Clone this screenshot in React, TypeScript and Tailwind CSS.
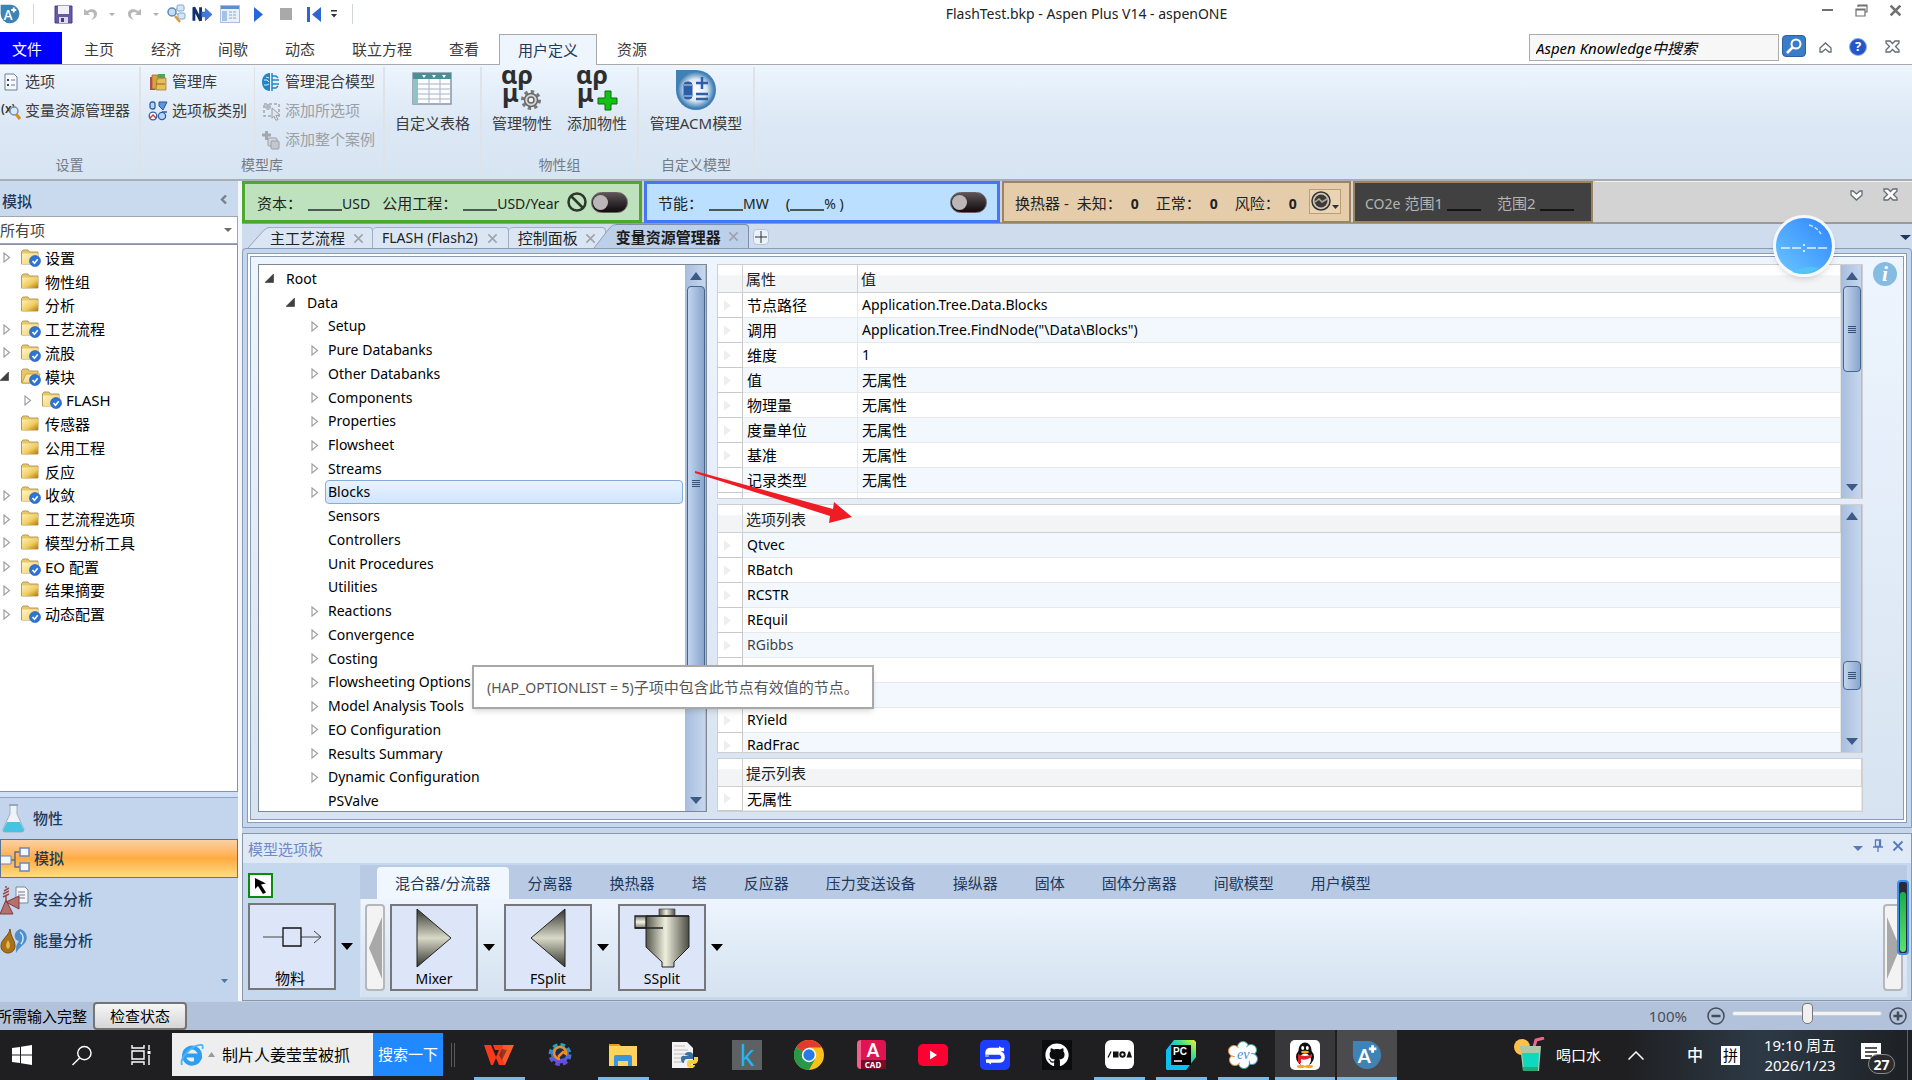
import React from "react";
import { FaGithub } from "react-icons/fa";

const latin = "text-[14px]";

/* ---------- small shared drawings ---------- */

function AspenLogo({ size }: { size: number }) {
  return (
    <svg width={size} height={size} viewBox="0 0 32 32" aria-hidden="true">
      <path d="M1 1h17a15 15 0 1 1-17 15z" fill="#3f82b5" />
      <text x="6" y="25" fontSize="20" fontWeight="700" fill="#fff" fontFamily="Lato, sans-serif">A</text>
      <path d="M18 9.500h8M22 5.500v8" stroke="#fff" strokeWidth="3" />
    </svg>
  );
}

function Caret({ color = "#000", w = 12, h = 7 }: { color?: string; w?: number; h?: number }) {
  return (
    <svg width={w} height={h} viewBox="0 0 12 7" preserveAspectRatio="none" aria-hidden="true">
      <path d="M0 0h12L6 7z" fill={color} />
    </svg>
  );
}

function CaretUp() {
  return (
    <svg width="12" height="8" viewBox="0 0 12 8" aria-hidden="true">
      <path d="M0 8h12L6 0z" fill="#3c5a86" />
    </svg>
  );
}

function OpenTri() {
  return (
    <svg width="8" height="11" viewBox="0 0 8 11" aria-hidden="true">
      <path d="M1 1v9l5.500-4.500z" fill="#fff" stroke="#a0a0a0" strokeWidth="1.200" />
    </svg>
  );
}

function FilledTri() {
  return (
    <svg width="9" height="9" viewBox="0 0 9 9" aria-hidden="true">
      <path d="M8.500 0v8.500H0z" fill="#404040" stroke="#222" strokeWidth="0.500" />
    </svg>
  );
}

function Folder({ checked, open }: { checked?: boolean; open?: boolean }) {
  return (
    <svg width="20" height="18" viewBox="0 0 20 18" aria-hidden="true">
      <defs>
        <linearGradient id="fold" x1="0" y1="0" x2="1" y2="1">
          <stop offset="0" stopColor="#fdf0b4" />
          <stop offset=".55" stopColor="#f0cd62" />
          <stop offset="1" stopColor="#b87a0a" />
        </linearGradient>
        <linearGradient id="foldl" x1="0" y1="0" x2="1" y2="1">
          <stop offset="0" stopColor="#fff3c0" />
          <stop offset="1" stopColor="#f1cf6d" />
        </linearGradient>
      </defs>
      <path d="M.5 15V2.500L2 1h5l1.500 2H17v12z" fill="#e9c766" stroke="#b39b62" />
      {open ? (
        <path d="M1 15L5 6h14l-3 9z" fill="url(#foldl)" stroke="#c9a54a" />
      ) : (
        <path d="M1 4.500h16V15H1z" fill={checked ? "url(#foldl)" : "url(#fold)"} />
      )}
      {checked && (
        <>
          <circle cx="14" cy="12" r="5.500" fill="#2d74d8" stroke="#1c56ac" strokeWidth=".6" />
          <path d="M11.500 12l2 2.200 3.200-4" fill="none" stroke="#fff" strokeWidth="1.600" />
        </>
      )}
    </svg>
  );
}

function Cross({ size, color, width }: { size: number; color: string; width: number }) {
  return (
    <svg width={size} height={size} viewBox="0 0 12 12" aria-hidden="true">
      <path d="M1.500 1.500l9 9M10.500 1.500l-9 9" stroke={color} strokeWidth={width} />
    </svg>
  );
}

function OutlinedCross() {
  return (
    <svg width="15" height="13" viewBox="0 0 15 13" aria-hidden="true">
      <path d="M1 1h4l2.500 2.500L10 1h4v2l-3.500 3.500L14 10v2h-4L7.500 9.500 5 12H1v-2l3.500-3.500L1 3z" fill="#fff" stroke="#656b75" strokeWidth="1.300" />
    </svg>
  );
}

function OutlinedChevron({ down }: { down?: boolean }) {
  return (
    <svg width="13" height="11" viewBox="0 0 13 11" className={down ? "rotate-180" : ""} aria-hidden="true">
      <path d="M1 6l5.500-5L12 6v4h-2L6.500 7 3 10H1z" fill="#fff" stroke="#656b75" strokeWidth="1.300" />
    </svg>
  );
}

/* ---------- title bar ---------- */

function IconButton({ label, className, children }: { label: string; className?: string; children: React.ReactNode }) {
  return (
    <button type="button" aria-label={label} className={"flex shrink-0 items-center justify-center " + (className ?? "")}>
      {children}
    </button>
  );
}

function TitleBar() {
  return (
    <header className="flex h-8 shrink-0 bg-white">
      <div className="flex h-7 items-center">
        <IconButton label="Aspen Plus" className="w-5"><AspenLogo size={20} /></IconButton>
        <span className="ml-[13px] h-5 w-px bg-gray-300" />
        <IconButton label="保存" className="ml-[19px] w-5">
          <svg width="19" height="19" viewBox="0 0 19 19">
            <path d="M1 1h17v17H1z" fill="#6a57a8" stroke="#4c3c86" />
            <path d="M4 1h11v8H4z" fill="#eef0fa" />
            <path d="M5 12h9v6H5z" fill="#d9dced" />
            <path d="M7 13h3v4H7z" fill="#4c3c86" />
          </svg>
        </IconButton>
        <IconButton label="撤销" className="ml-[9px] w-4">
          <svg width="15" height="15" viewBox="0 0 15 15"><path d="M1 2v6h6L5 6c3-2 6-1 6 2 0 2-1 3-3 5 4-1 6-3 6-6 0-5-6-6-10-3z" fill="#b8b8b8" /></svg>
        </IconButton>
        <IconButton label="撤销列表" className="ml-2 w-3"><Caret color="#b0b0b0" w={6} h={3} /></IconButton>
        <IconButton label="重做" className="ml-2 w-4">
          <svg width="15" height="15" viewBox="0 0 15 15" className="-scale-x-100"><path d="M1 2v6h6L5 6c3-2 6-1 6 2 0 2-1 3-3 5 4-1 6-3 6-6 0-5-6-6-10-3z" fill="#b8b8b8" /></svg>
        </IconButton>
        <IconButton label="重做列表" className="ml-2 w-3"><Caret color="#b0b0b0" w={6} h={3} /></IconButton>
        <IconButton label="查找" className="ml-1 w-5">
          <svg width="20" height="20" viewBox="0 0 20 20">
            <path d="M7 8l5-4M8 9l6 2" stroke="#6d9cc8" />
            <rect x="11" y="1" width="7" height="6" rx="1.500" fill="#d5e6f6" stroke="#7ba5cc" />
            <rect x="12" y="9" width="7" height="6" rx="1.500" fill="#d5e6f6" stroke="#7ba5cc" />
            <circle cx="6" cy="8" r="4" fill="#c2def5" stroke="#6088b0" strokeWidth="1.500" />
            <path d="M9 12l5 6" stroke="#d99a37" strokeWidth="2.500" />
          </svg>
        </IconButton>
        <IconButton label="下一步" className="ml-1.5 w-5">
          <svg width="21" height="18" viewBox="0 0 21 18">
            <path d="M2 16V2l7 14V2" fill="none" stroke="#10306e" strokeWidth="3" />
            <path d="M10 7h4V3l7 6.500-7 6.500v-4h-4z" fill="#3e7ae0" stroke="#2450a8" strokeWidth=".6" />
          </svg>
        </IconButton>
        <IconButton label="控制面板" className="ml-2 w-5">
          <svg width="20" height="18" viewBox="0 0 20 18">
            <rect x=".5" y=".5" width="19" height="17" fill="#e8f0fa" stroke="#a9bfdd" />
            <path d="M1 1h18v3H1z" fill="#5b8fd2" />
            <path d="M2 6h5v10H2z" fill="#a5c2e6" />
            <path d="M9 7h8M9 10h8M9 13h8" stroke="#8ba8d0" strokeDasharray="3 1" />
          </svg>
        </IconButton>
        <IconButton label="运行" className="ml-3 w-3"><svg width="9" height="15" viewBox="0 0 9 15"><path d="M0 0l9 7.500L0 15z" fill="#2668dc" /></svg></IconButton>
        <IconButton label="停止" className="ml-4 w-3"><span className="size-3 bg-[#a9a9a9]" /></IconButton>
        <IconButton label="重新初始化" className="ml-3.5 w-4">
          <svg width="15" height="15" viewBox="0 0 15 15"><path d="M0 0h3v15H0zM14 0v15L5 7.500z" fill="#2e66cf" /></svg>
        </IconButton>
        <IconButton label="自定义" className="ml-1.5 w-3">
          <svg width="8" height="8" viewBox="0 0 8 8"><path d="M1 0h6v1.500H1zM1 4h6L4 7.500z" fill="#333" /></svg>
        </IconButton>
        <span className="ml-3 h-5 w-px bg-gray-300" />
      </div>
      <h1 className="min-w-0 flex-1 truncate pt-1 text-center text-[14px] leading-5 text-[#222]">FlashTest.bkp - Aspen Plus V14 - aspenONE</h1>
      <div className="flex h-5 items-center justify-end gap-5 pr-[10px]">
        <IconButton label="最小化" className="w-3.5"><span className="h-[2px] w-[11px] bg-[#707070]" /></IconButton>
        <IconButton label="还原" className="w-3.5">
          <svg width="13" height="13" viewBox="0 0 13 13"><path d="M3 3V1h9v7h-2M1 5h9v7H1zM1 6h9M3 2h9" fill="none" stroke="#707070" strokeWidth="1.200" /></svg>
        </IconButton>
        <IconButton label="关闭" className="w-3.5"><Cross size={13} color="#707070" width={2.4} /></IconButton>
      </div>
    </header>
  );
}

/* ---------- ribbon ---------- */

function RibbonTabs() {
  return (
    <nav className="flex h-[33px] shrink-0 items-end border-b border-[#a9a9a9] bg-white text-[15px] text-[#3b3b3b]">
      <button type="button" className="h-full w-[62px] bg-[#0000ff] pr-2 pt-0.5 text-white">文件</button>
      <div className="flex h-full items-center gap-[37px] pl-[22px] pt-[3px]">
        <button type="button">主页</button>
        <button type="button">经济</button>
        <button type="button">间歇</button>
        <button type="button">动态</button>
        <button type="button">联立方程</button>
        <button type="button">查看</button>
      </div>
      <button type="button" className="-mb-px ml-5 h-[31px] border border-b-0 border-[#a9a9a9] bg-[#eef5fd] px-[18px] text-[#1e395b]">用户定义</button>
      <button type="button" className="ml-5 h-full pt-[3px]">资源</button>
      <div className="ml-auto flex h-full items-center pb-0.5 pr-3">
        <input aria-label="Aspen Knowledge中搜索" defaultValue="Aspen Knowledge中搜索" className="h-[27px] w-[250px] border border-[#ababab] bg-[#f7f7f7] px-1.5 text-[15px] italic text-black" />
        <IconButton label="搜索" className="mb-0.5 ml-[3px] h-[22px] w-6 rounded-sm border border-[#2c62a4] bg-[#3a7cc6]">
          <svg width="16" height="16" viewBox="0 0 16 16"><circle cx="10" cy="6" r="4.500" fill="none" stroke="#fff" strokeWidth="2" /><path d="M6.500 9.500L1 15" stroke="#fff" strokeWidth="2.500" /></svg>
        </IconButton>
        <IconButton label="折叠功能区" className="ml-3 w-3.5"><OutlinedChevron /></IconButton>
        <IconButton label="帮助" className="ml-[17px] size-[18px] rounded-full border border-[#8fb0e4] bg-[#2456c8] text-[13px] font-bold text-white">?</IconButton>
        <IconButton label="关闭窗口" className="mb-0.5 ml-[17px] w-4"><OutlinedCross /></IconButton>
      </div>
    </nav>
  );
}

function SmallCommand({ label, disabled, children }: { label: string; disabled?: boolean; children: React.ReactNode }) {
  return (
    <button type="button" disabled={disabled} className="flex h-[29px] items-center gap-1 text-[15px] text-[#3b3b3b] disabled:text-[#9b9fa6]">
      <span className="flex w-5 shrink-0 justify-center">{children}</span>
      <span className="whitespace-nowrap">{label}</span>
    </button>
  );
}

function LargeCommand({ label, children }: { label: string; children: React.ReactNode }) {
  return (
    <button type="button" className="flex flex-col items-center justify-start pt-[3px] text-[15px] leading-5 text-[#3b3b3b]">
      <span className="flex h-[43px] items-start">{children}</span>
      <span className="whitespace-nowrap">{label}</span>
    </button>
  );
}

function Group({ label, className, children }: { label?: string; className: string; children: React.ReactNode }) {
  return (
    <section className={"flex shrink-0 flex-col border-r-2 border-[#dfe3e8] " + className}>
      <div className="flex h-[88px] justify-center">{children}</div>
      <div className="text-center text-[14px] leading-5 text-[#747b85]">{label}</div>
    </section>
  );
}

function GreekLetters({ children }: { children: React.ReactNode }) {
  return (
    <svg width="40" height="40" viewBox="0 0 40 40" className="overflow-visible" aria-hidden="true">
      <g fontFamily="'Noto Sans', sans-serif" fontWeight="700" fontSize="25" fill="#2e2e2e">
        <text x="-1" y="14">αρ</text>
        <text x="0" y="32">μ</text>
      </g>
      {children}
    </svg>
  );
}

function Ribbon() {
  return (
    <div className="flex h-[116px] shrink-0 border-b-2 border-[#a8adb5] bg-gradient-to-b from-[#edf5fe] via-[#dce8f5] to-[#d7e4f2] pb-1 pt-[2px]">
      <Group label="设置" className="w-[141px]">
        <div className="flex w-full flex-col pl-px">
          <SmallCommand label="选项">
            <svg width="16" height="18" viewBox="0 0 16 18"><path d="M2 1h9l3 3v13H2z" fill="#f5f8fc" stroke="#6c7f99" /><path d="M4 6h2v2H4zM4 11h2v2H4z" fill="#444" /><path d="M8 7h4M8 12h4" stroke="#5f7ea8" /></svg>
          </SmallCommand>
          <SmallCommand label="变量资源管理器">
            <svg width="20" height="20" viewBox="0 0 20 20" className="overflow-visible"><text x="0" y="12" fontSize="12" fontWeight="600" fill="#333" fontFamily="Noto Sans">(x)</text><circle cx="13" cy="10" r="4" fill="#d5e9fa" stroke="#7890aa" strokeWidth="1.500" /><path d="M15 13l4 5" stroke="#d98c22" strokeWidth="3" /></svg>
          </SmallCommand>
        </div>
      </Group>
      <Group label="模型库" className="w-[244px]">
        <div className="flex w-[114px] shrink-0 flex-col border-r border-[#dfe3e8] pl-[7px]">
          <SmallCommand label="管理库">
            <svg width="20" height="20" viewBox="0 0 20 20"><path d="M2 5h5v13H2z" fill="#b5485f" /><path d="M4 3h6v14H4z" fill="#d9a23e" stroke="#8d6320" strokeWidth=".7" /><path d="M9 7l9-1v12H8z" fill="#e7bf5a" stroke="#9c7127" strokeWidth=".7" /><path d="M10 2h7v4h-7z" fill="#58a052" /><path d="M8 12h9" stroke="#8d6320" /></svg>
          </SmallCommand>
          <SmallCommand label="选项板类别">
            <svg width="20" height="20" viewBox="0 0 20 20"><rect x="2" y="1" width="5" height="7" rx="2" fill="#b8d4f4" stroke="#2f5fa8" strokeWidth="1.300" /><path d="M11 1h8l-2 4-2 4-4-4z" fill="#5d94dc" stroke="#27549c" /><circle cx="5" cy="15" r="3.800" fill="#fff" stroke="#2f5fa8" strokeWidth="1.300" /><path d="M2 17l3-3 3 3" stroke="#d63232" strokeWidth="1.400" fill="none" /><circle cx="14" cy="15" r="3.600" fill="#b8d4f4" stroke="#2f5fa8" strokeWidth="1.300" /><path d="M14 11h5" stroke="#2f5fa8" strokeWidth="1.500" /></svg>
          </SmallCommand>
        </div>
        <div className="flex flex-1 flex-col pl-[6px]">
          <SmallCommand label="管理混合模型">
            <svg width="20" height="20" viewBox="0 0 20 20"><path d="M9 1C4 1 1 5 1 10s3 9 8 9z" fill="#1e86c8" /><path d="M3 8h3l2 2M3 13h3l2-1M5 5l3 1" stroke="#d8ecfa" fill="none" /><path d="M11 1v18M11 4h4l2 2M11 8h7M11 12h7M11 16h4l2-2" stroke="#1e86c8" strokeWidth="1.500" fill="none" /></svg>
          </SmallCommand>
          <SmallCommand label="添加所选项" disabled>
            <svg width="20" height="20" viewBox="0 0 20 20"><rect x="3" y="3" width="15" height="12" fill="none" stroke="#a4a8ae" strokeWidth="1.500" strokeDasharray="3 2" /><path d="M4 6h6M7 3v6" stroke="#b4b8be" strokeWidth="3" /><path d="M11 7l8 7-4 .5 2 4-2 .8-2-4-2 2z" fill="#e2e5ea" stroke="#9a9ea5" /></svg>
          </SmallCommand>
          <SmallCommand label="添加整个案例" disabled>
            <svg width="20" height="20" viewBox="0 0 20 20"><path d="M1 5h9M5.500 1v9" stroke="#a4a8ae" strokeWidth="3" /><rect x="7" y="8" width="9" height="8" rx="1" fill="#d3d6db" stroke="#9a9ea5" /><rect x="10" y="11" width="8" height="8" rx="1" fill="#c4c8ce" stroke="#9a9ea5" /></svg>
          </SmallCommand>
        </div>
      </Group>
      <Group className="w-[97px]">
        <LargeCommand label="自定义表格">
          <svg width="40" height="36" viewBox="0 0 40 36" aria-hidden="true">
            <rect x="1" y="3" width="38" height="31" fill="#fbfcfe" stroke="#8795a8" strokeWidth="1.500" />
            <path d="M1 3h38v6H1z" fill="#4b8f94" /><path d="M1 9h5v25H1z" fill="#8fc3c4" />
            <path d="M10 5h4l-2 3zM20 5h4l-2 3zM30 5h4l-2 3z" fill="#fff" />
            <path d="M6 14h33M6 19h33M6 24h33M6 29h33M17 9v25M28 9v25" stroke="#a8b4c6" />
          </svg>
        </LargeCommand>
      </Group>
      <Group label="物性组" className="w-[157px]">
        <div className="flex gap-[15px]">
          <LargeCommand label="管理物性">
            <GreekLetters>
              <g transform="translate(29 30)">
                <circle r="8.500" fill="none" stroke="#777" strokeWidth="3" strokeDasharray="3.300 3.300" />
                <circle r="6.500" fill="#d6d6d6" stroke="#666" strokeWidth="1.500" /><circle r="3" fill="#eef2f8" stroke="#666" strokeWidth="1.500" />
              </g>
            </GreekLetters>
          </LargeCommand>
          <LargeCommand label="添加物性">
            <GreekLetters><path d="M28 21h6v7h6v6h-6v6h-6v-6h-7v-6h7z" fill="#12c212" stroke="#0a6e0a" /></GreekLetters>
          </LargeCommand>
        </div>
      </Group>
      <Group label="自定义模型" className="w-[116px]">
        <LargeCommand label="管理ACM模型">
          <svg width="40" height="40" viewBox="0 0 40 40" aria-hidden="true">
            <defs><radialGradient id="acm"><stop offset="0" stopColor="#fff" /><stop offset=".6" stopColor="#dde8f4" /><stop offset="1" stopColor="#4784b8" /></radialGradient></defs>
            <path d="M0 0h20a20 20 0 1 1-20 20z" fill="#3f80b5" />
            <circle cx="20" cy="20" r="18" fill="url(#acm)" />
            <rect x="8" y="12" width="8" height="17" rx="3" fill="#2c5fa8" stroke="#2c5fa8" />
            <path d="M8 15h8M8 26h8" stroke="#c8daf0" />
            <path d="M20 13h12M26 7v12M20 24h12M20 29h12" stroke="#2c5fa8" strokeWidth="2.500" />
          </svg>
        </LargeCommand>
      </Group>
    </div>
  );
}

/* ---------- left navigation ---------- */

const navItems: { name: string; exp?: "closed" | "open"; checked?: boolean; child?: boolean }[] = [
  { name: "设置", exp: "closed", checked: true },
  { name: "物性组" },
  { name: "分析" },
  { name: "工艺流程", exp: "closed", checked: true },
  { name: "流股", exp: "closed", checked: true },
  { name: "模块", exp: "open", checked: true },
  { name: "FLASH", exp: "closed", checked: true, child: true },
  { name: "传感器" },
  { name: "公用工程" },
  { name: "反应" },
  { name: "收敛", exp: "closed", checked: true },
  { name: "工艺流程选项", exp: "closed" },
  { name: "模型分析工具", exp: "closed" },
  { name: "EO 配置", exp: "closed", checked: true },
  { name: "结果摘要", exp: "closed" },
  { name: "动态配置", exp: "closed", checked: true },
];

function ModeButton({ label, active, children }: { label: string; active?: boolean; children: React.ReactNode }) {
  return (
    <button
      type="button"
      className={
        active
          ? "mb-px flex h-[39px] shrink-0 items-center border border-[#5a7396] bg-gradient-to-b from-[#fcd0a2] via-[#ffab3f] to-[#ffdd80] text-left text-[15px] font-medium text-[#1e395b]"
          : "flex h-[41px] shrink-0 items-center text-left text-[15px] font-medium text-[#1e395b]"
      }
    >
      <span className="w-[33px] shrink-0">{children}</span>
      {label}
    </button>
  );
}

function Sidebar() {
  return (
    <aside className="flex w-[238px] shrink-0 flex-col bg-[#c3d5ec]">
      <div className="flex h-[35px] shrink-0 items-center justify-between bg-[#c9daee] px-0.5 pr-[9px] pt-1.5 text-[15px] font-medium text-[#1e395b]">
        <h2>模拟</h2>
        <IconButton label="折叠" className="mb-1 w-3">
          <svg width="7" height="9" viewBox="0 0 7 9"><path d="M6 .5L2 4.500l4 4" fill="none" stroke="#7a7f88" strokeWidth="2.400" /></svg>
        </IconButton>
      </div>
      <div className="relative h-7 shrink-0 border-y border-r border-[#a0a6b0] bg-white">
        <select aria-label="筛选" className="h-full w-full appearance-none bg-transparent text-[15px] text-[#444]">
          <option>所有项</option>
        </select>
        <span className="pointer-events-none absolute inset-y-0 right-[5px] flex items-center"><Caret color="#6b6b6b" w={8} h={4} /></span>
      </div>
      <div className="flex-1 border-y border-r border-[#8593a8] bg-white pt-px">
        <ul className="flex h-[380px] flex-col">
          {navItems.map((n) => (
            <li key={n.name} className={n.child ? "flex flex-1 items-center pl-[21px]" : "flex flex-1 items-center"}>
              <span className={n.exp === "open" ? "w-[21px] shrink-0" : "w-[21px] shrink-0 pl-[3px]"}>
                {n.exp === "closed" && <OpenTri />}
                {n.exp === "open" && <FilledTri />}
              </span>
              <span className="w-6 shrink-0"><Folder checked={n.checked} open={n.exp === "open"} /></span>
              <span className="text-[15px] leading-5 text-black">{n.name}</span>
            </li>
          ))}
        </ul>
      </div>
      <div className="h-[6px] shrink-0 border-b border-[#8ca5c8] bg-[#cfe0f5]" />
      <ModeButton label="物性">
        <svg width="27" height="31" viewBox="0 0 27 31" aria-hidden="true">
          <path d="M10 2h7v9l7 15q0 3-2 3H5q-3 0-2-3l7-15z" fill="#eef3f8" stroke="#a4b0bf" /><path d="M7 19h13l4 8q0 2-2 2H5q-2 0-2-2z" fill="#45c3e0" /><path d="M9 1h9v2H9z" fill="#9aa7b6" />
        </svg>
      </ModeButton>
      <ModeButton label="模拟" active>
        <svg width="29" height="26" viewBox="0 0 29 26" aria-hidden="true">
          <path d="M9 14h5M19 6h-5v15h5" fill="none" stroke="#5a6f90" strokeWidth="1.500" />
          <path d="M-1 10h11v8H-1z" fill="#f2f6fd" stroke="#6d87b4" /><path d="M19 2h9v8h-9zM19 17h9v8h-9z" fill="#f2f6fd" stroke="#6d87b4" strokeWidth="1.500" />
        </svg>
      </ModeButton>
      <ModeButton label="安全分析">
        <svg width="29" height="30" viewBox="0 0 29 30" aria-hidden="true">
          <path d="M16 2h9l3 3v13H16z" fill="#f4f6fa" stroke="#7c8798" /><path d="M18 7h7M18 10h7M18 13h7" stroke="#6d7f99" />
          <path d="M6 15L0 29h13zM6 17l13-6v13z" fill="#b5716d" stroke="#7c403e" /><path d="M6 15V10M3 12l6-3M3 9l6-3M4 6l5-3M6 3V1" stroke="#9c4c48" strokeWidth="1.500" />
        </svg>
      </ModeButton>
      <ModeButton label="能量分析">
        <svg width="28" height="28" viewBox="0 0 28 28" aria-hidden="true">
          <path d="M10 2C9 9 1 12 1 19c0 5 4 7 7 7s7-2 7-7c0-6-4-8-5-17z" fill="#a8711a" stroke="#7a4e0c" /><path d="M8 13c-2 4-3 7 0 9 3-2 2-6 0-9z" fill="#e8b84a" />
          <path d="M20 2c7 2 9 10 4 15-3 3-6 5-8 9 0-6 0-8 3-12-3 0-5-3-4-7 1-3 3-4 5-5z" fill="#4d8fcd" /><path d="M20 5c4 3 4 8 1 12" fill="none" stroke="#d5e8fa" strokeWidth="1.500" />
        </svg>
      </ModeButton>
      <div className="flex h-10 shrink-0 items-center justify-end pr-2.5"><IconButton label="更多" className="w-2"><Caret color="#4d74a8" w={7} h={4} /></IconButton></div>
    </aside>
  );
}

/* ---------- KPI strip ---------- */

function Toggle({ label, className }: { label: string; className?: string }) {
  return (
    <input
      type="checkbox"
      aria-label={label}
      className={
        "relative h-[21px] w-[37px] shrink-0 appearance-none rounded-full border border-[#6a6062] bg-gradient-to-b from-[#5c5456] to-[#120c0f] before:absolute before:left-px before:top-[2px] before:size-[15px] before:rounded-full before:bg-[#bcb6b8] before:content-[''] " +
        (className ?? "")
      }
    />
  );
}

function Blank({ dark }: { dark?: boolean }) {
  return <span className={dark ? "mx-1 inline-block h-[2px] w-[34px] shrink-0 translate-y-[7px] bg-[#151515]" : "inline-block h-[2px] w-[34px] shrink-0 translate-y-[7px] bg-[#4a5a50]"} />;
}

function KpiBar() {
  return (
    <div className="flex h-[43px] shrink-0 gap-0.5 whitespace-nowrap border-b-2 border-[#9a9a9a] bg-[#d3d3d3] text-[15px] text-[#222]">
      <div className="flex h-[42px] w-[400px] items-center border-[3px] border-[#4ea72e] bg-[#bde2bd] pl-3 pt-0.5">
        资本：<span className="ml-1.5 flex items-center"><Blank /><span className={latin}>USD</span></span>
        <span className="ml-3">公用工程：</span><span className="ml-1.5 flex items-center"><Blank /><span className={latin}>USD/Year</span></span>
        <IconButton label="停用" className="mb-0.5 ml-2 w-5">
          <svg width="20" height="20" viewBox="0 0 20 20"><circle cx="10" cy="10" r="8.500" fill="none" stroke="#2b382b" strokeWidth="2.500" /><path d="M4 4l12 12" stroke="#2b382b" strokeWidth="2.500" /></svg>
        </IconButton>
        <Toggle label="经济分析" className="mb-0.5 ml-1" />
      </div>
      <div className="flex h-[42px] w-[356px] items-center border-[3px] border-[#4377f5] bg-[#bbdffe] pl-[11px] pt-0.5">
        节能：<span className="ml-1.5 flex items-center"><Blank /><span className={latin}>MW</span></span>
        <span className="ml-[17px] flex items-center">(<Blank /><span className={latin}>% )</span></span>
        <Toggle label="能量分析" className="mb-0.5 ml-auto mr-2.5" />
      </div>
      <div className="flex h-[42px] w-[349px] items-center border-2 border-[#9b8460] bg-[#e5ccab] pl-[11px] pt-0.5">
        换热器 - <span className="ml-2">未知：</span><b className="w-[26px] text-center text-[14px]">0</b>
        <span className="ml-2">正常：</span><b className="w-[26px] text-center text-[14px]">0</b>
        <span className="ml-2">风险：</span><b className="w-[26px] text-center text-[14px]">0</b>
        <IconButton label="换热器状态" className="mb-1 ml-[3px] h-[25px] w-8 border border-[#bd9d73] bg-[#e9d4b6]">
          <svg width="30" height="22" viewBox="0 0 30 22"><circle cx="11" cy="11" r="9" fill="#d5c6ae" stroke="#333" strokeWidth="1.500" /><circle cx="11" cy="11" r="6.500" fill="#3b3b3b" /><path d="M5 12l4-3 3 3 5-3" stroke="#b8a98f" strokeWidth="1.500" fill="none" /><path d="M22 15h7l-3.500 4z" fill="#333" /></svg>
        </IconButton>
      </div>
      <div className="flex h-[42px] w-[240px] items-center border-2 border-[#9b8460] bg-[#414141] pl-2.5 pt-0.5 text-[#b4b4b4]">
        <span className="text-[14px]">CO2e</span><span className="ml-1">范围1</span><Blank dark />
        <span className="ml-3">范围2</span><Blank dark />
      </div>
      <div className="flex flex-1 items-start justify-end gap-[19px] border-t border-[#f2f2f2] pr-3.5 pt-1.5">
        <IconButton label="展开" className="mt-0.5 w-3.5"><OutlinedChevron down /></IconButton>
        <IconButton label="关闭" className="w-4"><OutlinedCross /></IconButton>
      </div>
    </div>
  );
}

/* ---------- document tabs ---------- */

function DocTab({ label, active, slant, className }: { label: string; active?: boolean; slant?: boolean; className?: string }) {
  const fill = active ? "#bdd0e9" : "#dbe6f5";
  return (
    <div className={"flex items-stretch " + (active ? "h-6 " : "h-[21px] ") + (className ?? "")}>
      {slant && (
        <svg width="22" height="100%" viewBox="0 0 24 24" preserveAspectRatio="none" className="shrink-0" aria-hidden="true">
          <path d="M0 24L17 4Q20 .5 24 .5V24z" fill={fill} />
          <path d="M0 24L17 4Q20 .5 24 .5" fill="none" stroke="#8e9db2" />
        </svg>
      )}
      <div
        className={
          "flex items-center gap-[7px] rounded-tr border-r border-t pr-2 " +
          (active ? "border-[#7f8fa8] bg-[#bdd0e9]" : slant ? "border-[#a2afc2] bg-[#dbe6f5]" : "rounded-tl border-[#a2afc2] bg-[#dbe6f5] pl-[9px]")
        }
      >
        <button type="button" className={active ? "text-[15px] font-bold leading-5 text-[#1b1b1b]" : "text-[15px] leading-5 text-[#222]"}>{label}</button>
        <IconButton label={"关闭 " + label} className="w-3"><Cross size={11} color="#a0a4aa" width={1.8} /></IconButton>
      </div>
    </div>
  );
}

function DocTabs() {
  return (
    <div className="flex h-6 shrink-0 items-end whitespace-nowrap bg-[#cfdcee] pl-1.5 pr-px">
      <DocTab label="主工艺流程" slant />
      <div className="flex h-[21px]">
        <div className="flex items-center gap-[9px] rounded-t border-r border-t border-[#a2afc2] bg-[#dbe6f5] px-[9px]">
          <button type="button" className="text-[14px] leading-5 text-[#222]">FLASH (Flash2)</button>
          <IconButton label="关闭 FLASH" className="w-3"><Cross size={11} color="#a0a4aa" width={1.8} /></IconButton>
        </div>
      </div>
      <DocTab label="控制面板" />
      <DocTab label="变量资源管理器" active slant className="-ml-3" />
      <IconButton label="新建标签" className="mb-[3px] ml-1 size-4 rounded-sm border border-[#b7c6da] bg-[#e9f1fa]">
        <svg width="12" height="12" viewBox="0 0 12 12"><path d="M0 6h12M6 0v12" stroke="#333" /></svg>
      </IconButton>
      <IconButton label="标签列表" className="mb-2 ml-auto w-3"><Caret color="#1e395b" w={11} h={5} /></IconButton>
    </div>
  );
}

/* ---------- explorer ---------- */

const tree: [string, number, "open" | "closed" | ""][] = [
  ["Root", 0, "open"],
  ["Data", 1, "open"],
  ["Setup", 2, "closed"],
  ["Pure Databanks", 2, "closed"],
  ["Other Databanks", 2, "closed"],
  ["Components", 2, "closed"],
  ["Properties", 2, "closed"],
  ["Flowsheet", 2, "closed"],
  ["Streams", 2, "closed"],
  ["Blocks", 2, "closed"],
  ["Sensors", 2, ""],
  ["Controllers", 2, ""],
  ["Unit Procedures", 2, ""],
  ["Utilities", 2, ""],
  ["Reactions", 2, "closed"],
  ["Convergence", 2, "closed"],
  ["Costing", 2, "closed"],
  ["Flowsheeting Options", 2, "closed"],
  ["Model Analysis Tools", 2, "closed"],
  ["EO Configuration", 2, "closed"],
  ["Results Summary", 2, "closed"],
  ["Dynamic Configuration", 2, "closed"],
  ["PSValve", 2, ""],
];

const indents = ["", "pl-[21px]", "pl-[42px]"];

function ScrollBar({ before, thumb, after }: { before: string; thumb: string; after: string }) {
  return (
    <div className="flex w-[21px] shrink-0 flex-col items-center border-x border-[#a9bddb] bg-gradient-to-r from-[#a9bfdf] to-[#c6d6ee]">
      <span className="flex h-[21px] shrink-0 items-center"><CaretUp /></span>
      <span className={before} />
      <span className={"flex w-[18px] flex-col items-center justify-center gap-px rounded-sm border border-[#44658f] bg-gradient-to-r from-[#c3d5ee] to-[#88a5cc] " + thumb}>
        <i className="h-px w-2 bg-[#35507a]" />
        <i className="h-px w-2 bg-[#35507a]" />
        <i className="h-px w-2 bg-[#35507a]" />
        <i className="h-px w-2 bg-[#35507a]" />
      </span>
      <span className={after} />
      <span className="flex h-[21px] shrink-0 items-center"><Caret color="#3c5a86" w={12} h={7} /></span>
    </div>
  );
}

function NodeTree() {
  return (
    <div className="flex w-[449px] shrink-0 border border-[#7d8894] bg-white">
      <ul className="-mb-0.5 flex min-w-0 flex-1 flex-col pr-0.5 pt-[2px]">
        {tree.map(([name, level, state]) => (
          <li key={name} className={"flex min-h-0 flex-1 items-center " + indents[level]}>
            <span className={state === "open" ? "w-6 shrink-0 pl-1.5" : "w-6 shrink-0 pl-2.5"}>
              {state === "open" && <FilledTri />}
              {state === "closed" && <OpenTri />}
            </span>
            <span
              className={
                name === "Blocks"
                  ? "flex h-6 flex-1 items-center rounded-sm border border-[#84acdd] bg-gradient-to-b from-[#eaf3ff] to-[#d0e5ff] px-0.5 text-[14px] leading-5 text-black"
                  : "border border-transparent px-0.5 text-[14px] leading-5 text-black"
              }
            >
              {name}
            </span>
          </li>
        ))}
      </ul>
      <ScrollBar before="" thumb="flex-[395]" after="flex-[110]" />
    </div>
  );
}

function RowMark() {
  return (
    <td className="w-[26px] border-b border-r border-[#c9c9c9] bg-white">
      <svg width="7" height="11" viewBox="0 0 8 12" className="ml-1.5" aria-hidden="true"><path d="M0 0v12l8-6z" fill="#eeeeee" /></svg>
    </td>
  );
}

const head = "h-[28px] border-b border-r border-[#d0d0d0] bg-gradient-to-b from-white from-35% to-[#f3f4f6] to-40% px-[3px] text-left text-[15px] leading-5 font-normal text-[#222]";
const cell = "border-b border-r border-[#e8e8e8] px-1 text-[15px] leading-5 text-black";
const cellLatin = "border-b border-r border-[#e8e8e8] px-1 text-[14px] leading-5 text-black";

const attributes = [
  ["节点路径", "Application.Tree.Data.Blocks"],
  ["调用", 'Application.Tree.FindNode("\\Data\\Blocks")'],
  ["维度", "1"],
  ["值", "无属性"],
  ["物理量", "无属性"],
  ["度量单位", "无属性"],
  ["基准", "无属性"],
  ["记录类型", "无属性"],
  ["", ""],
];

const options = ["Qtvec", "RBatch", "RCSTR", "REquil", "RGibbs", "RPlug", "RStoic", "RYield", "RadFrac"];

function Details() {
  return (
    <div className="flex min-w-0 flex-1 flex-col gap-[5px]">
      <div className="flex h-[235px] shrink-0 overflow-hidden border border-[#cfcfcf] bg-white">
        <div className="min-w-0 flex-1 overflow-hidden">
          <table className="w-full table-fixed border-separate border-spacing-0">
            <thead>
              <tr>
                <th className={head + " w-[25px]"} aria-label="行" />
                <th className={head + " w-[115px]"}>属性</th>
                <th className={head}>值</th>
              </tr>
            </thead>
            <tbody>
              {attributes.map(([k, v], i) => (
                <tr key={i} className={i % 2 ? "h-[25px] bg-[#f2f8fd]" : "h-[25px]"}>
                  <RowMark />
                  <td className={cell}>{k}</td>
                  <td className={i < 3 ? cellLatin : cell}>{v}</td>
                </tr>
              ))}
            </tbody>
          </table>
        </div>
        <ScrollBar before="" thumb="h-[86px] shrink-0" after="flex-1" />
      </div>
      <div className="flex min-h-0 flex-1 overflow-hidden border border-[#cfcfcf] bg-white">
        <div className="min-w-0 flex-1 overflow-hidden">
          <table className="w-full table-fixed border-separate border-spacing-0">
            <thead>
              <tr>
                <th className={head + " w-[25px]"} aria-label="行" />
                <th className={head}>选项列表</th>
              </tr>
            </thead>
            <tbody>
              {options.map((o, i) => (
                <tr key={o} className={i % 2 ? "h-[25px]" : "h-[25px] bg-[#f2f8fd]"}>
                  <RowMark />
                  <td className={cellLatin + (o === "RGibbs" ? " opacity-75" : "") + (o === "RPlug" || o === "RStoic" ? " *:invisible" : "")}>
                    <span>{o}</span>
                  </td>
                </tr>
              ))}
            </tbody>
          </table>
        </div>
        <ScrollBar before="flex-[135]" thumb="h-[29px] shrink-0" after="flex-[41]" />
      </div>
      <div className="h-[54px] shrink-0 overflow-hidden border border-[#cfcfcf] bg-white">
        <table className="w-full table-fixed border-separate border-spacing-0">
          <thead>
            <tr>
              <th className={head + " w-[25px]"} aria-label="行" />
              <th className={head}>提示列表</th>
            </tr>
          </thead>
          <tbody>
            <tr className="h-6">
              <RowMark />
              <td className={cell}>无属性</td>
            </tr>
          </tbody>
        </table>
      </div>
    </div>
  );
}

function Explorer() {
  return (
    <div className="flex min-h-0 flex-1 flex-col rounded-t border border-[#8b9bb0] bg-[#c3d8f0] p-1">
      <div className="flex min-h-0 flex-1 border border-[#8b9bb0] bg-white p-0.5">
        <div className="relative flex min-h-0 min-w-0 flex-1 border border-[#8b9bb0] bg-gradient-to-b from-[#eef5fe] to-[#d7e3f1] p-[7px]">
          <NodeTree />
          <div className="ml-2.5 mr-2.5 flex min-w-0 flex-1">
            <Details />
          </div>
          <IconButton label="信息" className="-mt-0.5 -mr-px size-6 self-start rounded-full bg-[#86bbe2] font-['Liberation_Serif',serif] text-[21px] font-bold italic leading-6 text-white">i</IconButton>

          <svg width="163" height="54" viewBox="0 0 163 54" className="pointer-events-none absolute left-[440px] top-[214px] z-10" aria-hidden="true">
            <path d="M4 0L142 38l1-7 18 15-23 6 1-7L4 2z" fill="#ee1c25" />
          </svg>
          <div role="tooltip" className="absolute left-[221px] top-[408px] z-20 flex h-[44px] items-center whitespace-nowrap border-2 border-[#a8a8a8] bg-white px-[13px] pt-px text-[#555] shadow-md">
            <span className="text-[14px]">(HAP_OPTIONLIST = 5)</span><span className="text-[15px]">子项中包含此节点有效值的节点。</span>
          </div>
        </div>
      </div>
    </div>
  );
}

/* ---------- model palette ---------- */

function PaletteItem({ label, children }: { label: string; children: React.ReactNode }) {
  return (
    <div className="flex items-center">
      <button type="button" className="flex h-[87px] w-[88px] flex-col items-center justify-between border-2 border-[#77777b] bg-[#dde6f8] pt-0.5 text-[15px] leading-5 text-black">
        {children}
        <span className={/[A-Z]/.test(label) ? "text-[14px]" : "pr-1"}>{label}</span>
      </button>
      <IconButton label={label + " 图标"} className="w-[22px]"><Caret w={12} h={7} /></IconButton>
    </div>
  );
}

const paletteTabs = ["分离器", "换热器", "塔", "反应器", "压力变送设备", "操纵器", "固体", "固体分离器", "间歇模型", "用户模型"];

function Palette() {
  return (
    <section className="relative mt-[5px] flex h-[168px] shrink-0 flex-col border border-[#8b97a8] bg-[#c6d8ed]">
      <div className="flex h-[29px] shrink-0 items-center bg-[#dfeaf6] pl-[5px] pr-[7px]">
        <h2 className="pt-0.5 text-[15px] text-[#7088c8]">模型选项板</h2>
        <div className="ml-auto flex items-center gap-2">
          <IconButton label="菜单" className="w-3"><Caret color="#5a79bd" w={10} h={5} /></IconButton>
          <IconButton label="固定" className="mb-1.5 w-3"><svg width="10" height="13" viewBox="0 0 10 13"><path d="M2.500 1h5v6.500h-5zM0 8h10M5 8v5M6.500 1v6" fill="none" stroke="#5a79bd" strokeWidth="1.300" /></svg></IconButton>
          <IconButton label="关闭" className="mb-1.5 w-3"><Cross size={12} color="#5a79bd" width={1.8} /></IconButton>
        </div>
      </div>
      <div className="flex min-h-0 flex-1 pt-0.5">
        <div className="flex w-[117px] shrink-0 flex-col gap-[5px] pl-[5px] pt-2">
          <IconButton label="选择" className="size-[25px] border-2 border-[#0b8a0b] bg-white">
            <svg width="14" height="18" viewBox="0 0 14 18"><path d="M1 1v11l3-3 5 8 3-1.500L7 7.500l5-1z" fill="#000" /></svg>
          </IconButton>
          <PaletteItem label="物料">
            <svg width="60" height="60" viewBox="0 0 60 60" aria-hidden="true">
              <path d="M1 30h20M39 30h20M52 24l7 6-7 6" fill="none" stroke="#444" /><path d="M21 21h18v18H21z" fill="none" stroke="#111" strokeWidth="1.300" />
            </svg>
          </PaletteItem>
        </div>
        <div className="mr-1 flex min-w-0 flex-1 flex-col">
          <div className="flex h-[34px] shrink-0 items-end whitespace-nowrap bg-[#b9cbe4] pl-[17px] text-[15px] text-[#1e395b]">
            <button type="button" className="mr-px h-8 rounded-t bg-[#f1f7fe] px-[18px]">混合器/分流器</button>
            {paletteTabs.map((t) => (
              <button type="button" key={t} className="h-8 pl-[18px] pr-[19px]">{t}</button>
            ))}
          </div>
          <div className="mb-[3px] flex min-h-0 flex-1 border-l border-[#dbe6f4] bg-gradient-to-b from-[#eff5fe] via-[#dfebf6] to-[#d6e2f0] pl-1 pr-1 pt-[5px]">
            <IconButton label="向左" className="h-[87px] w-5 rounded border-2 border-[#b4b7bc] bg-[#f3f3f3]">
              <svg width="13" height="62" viewBox="0 0 13 62"><path d="M13 0v62L0 31z" fill="#a8a8a8" /></svg>
            </IconButton>
            <div className="ml-[5px] flex h-[87px] gap-1">
              <PaletteItem label="Mixer">
                <svg width="38" height="60" viewBox="0 0 38 60" aria-hidden="true">
                  <defs><linearGradient id="cone" x1="0" y1="0" x2="0" y2="1"><stop offset="0" stopColor="#33342e" /><stop offset=".5" stopColor="#d9d9c8" /><stop offset="1" stopColor="#33342e" /></linearGradient></defs>
                  <path d="M2 1v58l34-29z" fill="url(#cone)" stroke="#222" />
                </svg>
              </PaletteItem>
              <PaletteItem label="FSplit">
                <svg width="38" height="60" viewBox="0 0 38 60" aria-hidden="true"><path d="M36 1v58L2 30z" fill="url(#cone)" stroke="#222" /></svg>
              </PaletteItem>
              <PaletteItem label="SSplit">
                <svg width="56" height="60" viewBox="0 0 56 60" aria-hidden="true">
                  <defs>
                    <linearGradient id="cyl"><stop offset="0" stopColor="#55564c" /><stop offset=".45" stopColor="#eeeedd" /><stop offset="1" stopColor="#4b4c43" /></linearGradient>
                    <linearGradient id="pipe" x1="0" y1="0" x2="0" y2="1"><stop offset="0" stopColor="#77786c" /><stop offset=".5" stopColor="#f5f5e6" /><stop offset="1" stopColor="#77786c" /></linearGradient>
                  </defs>
                  <path d="M25 1h16v8H25z" fill="url(#cyl)" stroke="#444" strokeWidth=".7" />
                  <path d="M12 8h43v31L40 54v5H28v-5L12 39z" fill="url(#cyl)" stroke="#222" />
                  <path d="M1 8h11v12H1z" fill="url(#pipe)" stroke="#222" strokeWidth="1.300" /><path d="M1 20h28M12 8h43" stroke="#222" strokeWidth="1.500" />
                </svg>
              </PaletteItem>
            </div>
            <IconButton label="向右" className="ml-auto h-[87px] w-5 rounded border-2 border-[#b4b7bc] bg-[#f3f3f3]">
              <svg width="13" height="62" viewBox="0 0 13 62"><path d="M0 0v62l13-31z" fill="#a8a8a8" /></svg>
            </IconButton>
          </div>
        </div>
      </div>
      <div className="absolute right-0.5 top-[46px] flex h-[75px] w-3 flex-col overflow-hidden rounded border-2 border-[#3c8ef0] bg-[#2b2b38] p-px pt-2.5">
        <span className="flex-1 rounded-sm bg-gradient-to-b from-[#12b04a] to-[#5be070]" />
      </div>
    </section>
  );
}

/* ---------- status bar ---------- */

function StatusBar() {
  return (
    <footer className="flex h-[29px] shrink-0 items-center whitespace-nowrap border-t border-[#c3d1e4] bg-[#b1c2da] text-[15px] text-black">
      <span className="-ml-[3px] w-24">所需输入完整</span>
      <button type="button" className="h-7 w-[94px] rounded border-2 border-[#747474] bg-gradient-to-b from-[#f6f6f6] to-[#d6d6d6] leading-5">检查状态</button>
      <label htmlFor="zoom" className="ml-auto text-[15px] text-[#4a4f58]">100%</label>
      <IconButton label="缩小" className="ml-[19px] w-5">
        <svg width="18" height="18" viewBox="0 0 18 18"><circle cx="9" cy="9" r="8" fill="none" stroke="#444c58" strokeWidth="1.500" /><path d="M4.500 9h9" stroke="#444c58" strokeWidth="2.500" /></svg>
      </IconButton>
      <input
        id="zoom"
        type="range"
        defaultValue={50}
        className="mx-1.5 mb-1.5 h-5 w-[150px] appearance-none bg-transparent [&::-webkit-slider-runnable-track]:h-[5px] [&::-webkit-slider-runnable-track]:rounded [&::-webkit-slider-runnable-track]:border [&::-webkit-slider-runnable-track]:border-[#c9ced6] [&::-webkit-slider-runnable-track]:bg-[#f1f3f6] [&::-webkit-slider-thumb]:-mt-[9px] [&::-webkit-slider-thumb]:h-[21px] [&::-webkit-slider-thumb]:w-[11px] [&::-webkit-slider-thumb]:appearance-none [&::-webkit-slider-thumb]:rounded-sm [&::-webkit-slider-thumb]:rounded-b-[5px] [&::-webkit-slider-thumb]:border [&::-webkit-slider-thumb]:border-[#777] [&::-webkit-slider-thumb]:bg-[#f0f0f0]"
      />
      <IconButton label="放大" className="mr-1 w-5">
        <svg width="18" height="18" viewBox="0 0 18 18"><circle cx="9" cy="9" r="8" fill="none" stroke="#444c58" strokeWidth="1.500" /><path d="M4.500 9h9M9 4.500v9" stroke="#444c58" strokeWidth="2.500" /></svg>
      </IconButton>
    </footer>
  );
}

/* ---------- taskbar ---------- */

function Task({ label, running, shade, children }: { label: string; running?: boolean; shade?: string; children: React.ReactNode }) {
  return (
    <button type="button" aria-label={label} className={"flex h-full w-[62px] flex-col items-center border-x border-[#1f1f22] " + (shade ?? "")}>
      <span className="flex flex-1 items-center pt-0.5">{children}</span>
      <span className={running ? (shade ? "h-[3px] w-full bg-[#76b9ed]" : "h-[3px] w-[51px] bg-[#76b9ed]") : "h-[3px]"} />
    </button>
  );
}

function Taskbar() {
  return (
    <footer className="flex h-[50px] shrink-0 items-stretch whitespace-nowrap bg-[#1f1f22] bg-gradient-to-r from-[#1f1f22] from-85% via-[#2d3a46] via-92% to-[#1d2024] text-white">
      <IconButton label="开始" className="ml-3 w-5">
        <svg width="20" height="20" viewBox="0 0 20 20"><path d="M0 3l8-1.100V9.500H0zM9 1.700L20 0v9.500H9zM0 10.500h8v7.600L0 17zM9 10.500h11V20L9 18.300z" fill="#fff" /></svg>
      </IconButton>
      <IconButton label="搜索" className="ml-10 w-5">
        <svg width="21" height="21" viewBox="0 0 21 21"><circle cx="13" cy="8" r="7" fill="none" stroke="#fff" strokeWidth="1.500" /><path d="M8 13l-7.500 7.500" stroke="#fff" strokeWidth="1.500" /></svg>
      </IconButton>
      <IconButton label="任务视图" className="ml-[39px] w-5">
        <svg width="20" height="20" viewBox="0 0 20 20"><path d="M1 0v3h12V0M1 20v-3h12v3M1 6h12v8H1zM18 0v5M18 10v10" fill="none" stroke="#fff" strokeWidth="1.400" /><path d="M16.500 6h3v3h-3z" fill="#fff" /></svg>
      </IconButton>
      <div className="ml-[21px] mt-[3px] flex h-[43px] w-[271px] bg-[#eeeeee]">
        <svg width="24" height="24" viewBox="0 0 24 24" className="ml-2 mt-2.5 shrink-0" aria-hidden="true">
          <path d="M4.500 12.500h15.500A8 8 0 1 0 19 16.500h-5" fill="none" stroke="#2f9df0" strokeWidth="4" />
          <path d="M2 22C-1 15 13 1 22 2c1 1 1 2 .5 4" fill="none" stroke="#4fb2f5" strokeWidth="1.800" />
        </svg>
        <span className="ml-1 self-center"><svg width="7" height="6" viewBox="0 0 7 6"><path d="M0 5l3.500-5L7 5z" fill="#999" /></svg></span>
        <input aria-label="搜索内容" defaultValue="制片人姜莹莹被抓" className="ml-[7px] w-0 min-w-0 flex-1 bg-transparent text-[16px] text-black" />
        <button type="button" className="w-[70px] shrink-0 bg-[#2189ff] text-[15px] text-white">搜索一下</button>
      </div>
      <span className="ml-2 w-1 self-center border-x border-[#5a5a5c] py-3" />
      <div className="ml-[13px] flex">
        <Task label="WPS" running>
          <svg width="30" height="22" viewBox="0 0 30 22"><path d="M0 1h7l5 12 3-7h-4l-2-5h16l-4 20h-6l-3-7-3 7H7z" fill="#fa3a1a" /><path d="M19 1h11l-9 20-3-7z" fill="#ff5a2a" /><path d="M18 5l-3 6 3 5 5-10z" fill="#1f1f22" opacity=".5" /></svg>
        </Task>
        <Task label="设置工具">
          <svg width="26" height="26" viewBox="0 0 26 26"><defs><linearGradient id="gr" x1="0" y1="0" x2="0" y2="1"><stop offset="0" stopColor="#1fa8b8" /><stop offset="1" stopColor="#6a45e8" /></linearGradient></defs><circle cx="12" cy="12.500" r="9.500" fill="none" stroke="url(#gr)" strokeWidth="4" strokeDasharray="4.500 3" /><circle cx="12" cy="12.500" r="9" fill="url(#gr)" /><circle cx="13" cy="11" r="6" fill="#1d2b50" /><path d="M10 15l5-5 3 2a6 6 0 1 0-6 5" fill="none" stroke="#f28c1e" strokeWidth="2.500" /></svg>
        </Task>
        <Task label="文件资源管理器" running>
          <svg width="28" height="24" viewBox="0 0 28 24"><path d="M0 1h10l2 2v3H0z" fill="#e0a21c" /><path d="M0 3h28v20H0z" fill="#ffd35c" /><path d="M5 23V14q0-2 2-2h14q2 0 2 2v9h-4v-5H9v5z" fill="#3d94d9" /></svg>
        </Task>
        <Task label="Python">
          <svg width="28" height="28" viewBox="0 0 28 28"><path d="M1 1h15l6 6v20H1z" fill="#f3f3f3" /><path d="M3 5h11M3 9h14M3 13h12M3 17h9M3 21h9" stroke="#bbb" /><path d="M14 14q0-3 4-3t4 3v4h-6q-3 0-3 4-3 0-3-4t4-3h4" fill="#3872a5" /><path d="M27 16q1 7-4 7h-3v1h4q0 3-4 3t-4-3v-2q0-3 3-3h4v-3z" fill="#f8cf3e" /></svg>
        </Task>
        <Task label="K"><span className="flex h-[30px] w-[30px] items-center justify-center bg-[#5e6164] font-['Open_Sans',sans-serif] text-[29px] leading-7 text-[#1fb6f5]">k</span></Task>
        <Task label="Chrome">
          <svg width="30" height="30" viewBox="0 0 30 30"><circle cx="15" cy="15" r="15" fill="#fbc116" /><path d="M15 15L2 7.500A15 15 0 0 1 28 7.500H15z" fill="#e23b2e" /><path d="M2 7.500A15 15 0 0 0 15 30l6.500-11.500L15 15z" fill="#279847" /><circle cx="15" cy="15" r="7.200" fill="#fff" /><circle cx="15" cy="15" r="5.700" fill="#2a78e8" /></svg>
        </Task>
        <Task label="AutoCAD">
          <span className="flex size-[29px] flex-col items-center rounded-sm border-l-4 border-[#f2608c] bg-[#e01450]">
            <b className="h-5 font-['Lato',sans-serif] text-[18px] leading-5">A</b>
            <b className="w-full bg-[#7d0a2c] text-center text-[8px] leading-[9px]">CAD</b>
          </span>
        </Task>
        <Task label="YouTube"><svg width="30" height="22" viewBox="0 0 30 22"><rect width="30" height="22" rx="5" fill="#ff0033" /><path d="M12 6.500v9l7-4.500z" fill="#fff" /></svg></Task>
        <Task label="S"><svg width="30" height="30" viewBox="0 0 30 30"><rect width="30" height="30" rx="5" fill="#1d3dff" /><path d="M24 9.500H11q-4 0-4 3.500h13q3 1 3 4v1" fill="none" stroke="#fff" strokeWidth="3.500" /><path d="M7 15.500v1M6 21h13q4 0 4-3.500" fill="none" stroke="#fff" strokeWidth="3.500" /><path d="M19 6l5.500 4H19zM11 24.500L5.500 20.500H11z" fill="#fff" /></svg></Task>
        <Task label="GitHub"><span className="flex size-[30px] items-center justify-center bg-[#0b0c0e]"><FaGithub size={24} /></span></Task>
        <Task label="MOA" running>
          <svg width="29" height="29" viewBox="0 0 29 29"><rect width="29" height="29" rx="6" fill="#fff" /><path d="M3 17.500l3-6" stroke="#111" strokeWidth="1.300" /><path d="M8 11.500h5.500v6H8zM21.500 17.500h5.500l-2-6h-1.500z" fill="#111" /><circle cx="17.500" cy="14.500" r="2.200" fill="none" stroke="#111" strokeWidth="2" /></svg>
        </Task>
        <Task label="PyCharm" running>
          <svg width="30" height="30" viewBox="0 0 30 30"><defs><linearGradient id="pc" x1="0" y1="1" x2="1" y2="0"><stop offset=".5" stopColor="#0cc0f0" /><stop offset=".7" stopColor="#3fe08a" /><stop offset="1" stopColor="#f8f02a" /></linearGradient></defs><path d="M8 0h20l2 2v15L20 30H1l-1-1V10z" fill="url(#pc)" /><path d="M5 5h20v20H5z" fill="#000" /><text x="7" y="15" fontSize="10" fontWeight="700" fill="#fff" fontFamily="Liberation Sans">PC</text><path d="M8 21h8" stroke="#fff" strokeWidth="1.500" /></svg>
        </Task>
        <Task label="EV" running>
          <svg width="30" height="28" viewBox="0 0 30 28"><g fill="#fff" strokeWidth="1"><circle cx="15" cy="6" r="5.500" stroke="#2cae8e" /><circle cx="23" cy="9" r="5.500" stroke="#2cae8e" /><circle cx="24" cy="18" r="5.500" stroke="#3b8ee0" /><circle cx="16" cy="22" r="5.500" stroke="#2cae8e" /><circle cx="7" cy="19" r="5.500" stroke="#e88a3c" /><circle cx="6" cy="10" r="5.500" stroke="#e88a3c" /></g><circle cx="15" cy="14" r="8.500" fill="#fff" /><text x="9" y="18" fontSize="14" fontStyle="italic" fill="#3b8ee0" fontFamily="Liberation Serif">ev</text></svg>
        </Task>
        <Task label="QQ" running shade="bg-[#38383b]">
          <svg width="30" height="30" viewBox="0 0 30 30"><rect width="30" height="30" rx="5" fill="#fff" /><ellipse cx="15" cy="17" rx="9" ry="9" fill="#111" /><ellipse cx="15" cy="10" rx="6.500" ry="7.500" fill="#111" /><ellipse cx="15" cy="20" rx="6" ry="6.500" fill="#fff" /><path d="M8 14q7 4 14 0v3q-7 4-11 2v4H8z" fill="#e3202a" /><ellipse cx="12.700" cy="8" rx="1.500" ry="2" fill="#fff" /><ellipse cx="17.300" cy="8" rx="1.500" ry="2" fill="#fff" /><ellipse cx="15" cy="12" rx="4" ry="1.300" fill="#f6a91c" /><ellipse cx="11" cy="26.500" rx="4" ry="1.700" fill="#f6a91c" /><ellipse cx="19" cy="26.500" rx="4" ry="1.700" fill="#f6a91c" /></svg>
        </Task>
        <Task label="Aspen Plus" running shade="bg-[#4b4b4e]"><AspenLogo size={30} /></Task>
      </div>
      <div className="ml-auto flex items-center">
        <svg width="32" height="36" viewBox="0 0 32 36" aria-hidden="true"><circle cx="8" cy="10" r="8" fill="#ffc04a" /><path d="M20 10l2-7 8-2" fill="none" stroke="#f0668a" strokeWidth="3" /><path d="M6 9h21l-2 25H9z" fill="#a9c9a8" /><path d="M8 16h17l-1 15H10z" fill="#0fd8c0" /><path d="M9 30h15v4H9z" fill="#23a877" /></svg>
        <span className="ml-2.5 text-[15px]">喝口水</span>
        <IconButton label="显示隐藏的图标" className="ml-[27px] w-4"><svg width="16" height="9" viewBox="0 0 16 9"><path d="M.5 8.500L8 1l7.500 7.500" fill="none" stroke="#fff" strokeWidth="1.500" /></svg></IconButton>
        <button type="button" className="ml-[43px] text-[16px] font-medium">中</button>
        <button type="button" className="ml-[18px] size-[19px] bg-white text-[15px] leading-[18px] text-black">拼</button>
        <time className="ml-5 w-20 text-center text-[15px] leading-5" dateTime="2026-01-23T19:10">19:10 周五<br />2026/1/23</time>
        <div className="relative ml-[21px] mr-2.5 h-9 w-9">
          <svg width="20" height="20" viewBox="0 0 20 20" className="mt-1.5" aria-hidden="true"><path d="M0 0h20v16h-5l-4 4v-4H0z" fill="#fff" /><path d="M4 5h12M4 9h12M4 13h7" stroke="#222" strokeWidth="1.400" /></svg>
          <span className="absolute left-[7px] top-[17px] flex h-5 w-[27px] items-center justify-center rounded-full border border-[#8a8a8a] bg-[#2b2b2d] text-[14px] font-bold">27</span>
        </div>
        <span className="mr-1 h-[50px] w-px bg-[#56606a]" />
      </div>
    </footer>
  );
}

/* ---------- page ---------- */

export default function App() {
  return (
    <div className="relative flex h-screen w-full flex-col overflow-hidden bg-[#cfdcee] font-['Noto_Sans','Noto_Sans_CJK_SC',sans-serif]">
      <TitleBar />
      <RibbonTabs />
      <Ribbon />
      <div className="flex min-h-0 flex-1">
        <Sidebar />
        <main className="flex min-w-0 flex-1 flex-col border-l-4 border-[#f3f6fa] bg-[#c6d6ea]">
          <KpiBar />
          <DocTabs />
          <Explorer />
          <Palette />
        </main>
      </div>
      <StatusBar />
      <Taskbar />
      <div className="absolute right-[77px] top-[215px] z-30 flex size-[62px] items-center justify-center rounded-full border-[3px] border-[#f4f9ff] bg-gradient-to-tr from-[#6cc6fe] to-[#2f84fd] shadow-md">
        <svg width="56" height="56" viewBox="0 0 56 56" aria-hidden="true">
          <path d="M5 30h9M16 30h9M31 30h9M42 30h9" stroke="#e4f2ff" strokeWidth="1.500" /><circle cx="28" cy="27" r="1" fill="#fff" /><circle cx="28" cy="33" r="1" fill="#fff" />
          <path d="M33 7q8 2 12 9" fill="none" stroke="#cfe6ff" strokeWidth="1.500" strokeDasharray="4 2" />
          <path d="M16 54q12-7 27-4-12 9-27 4z" fill="#52c4f5" />
        </svg>
      </div>
    </div>
  );
}
